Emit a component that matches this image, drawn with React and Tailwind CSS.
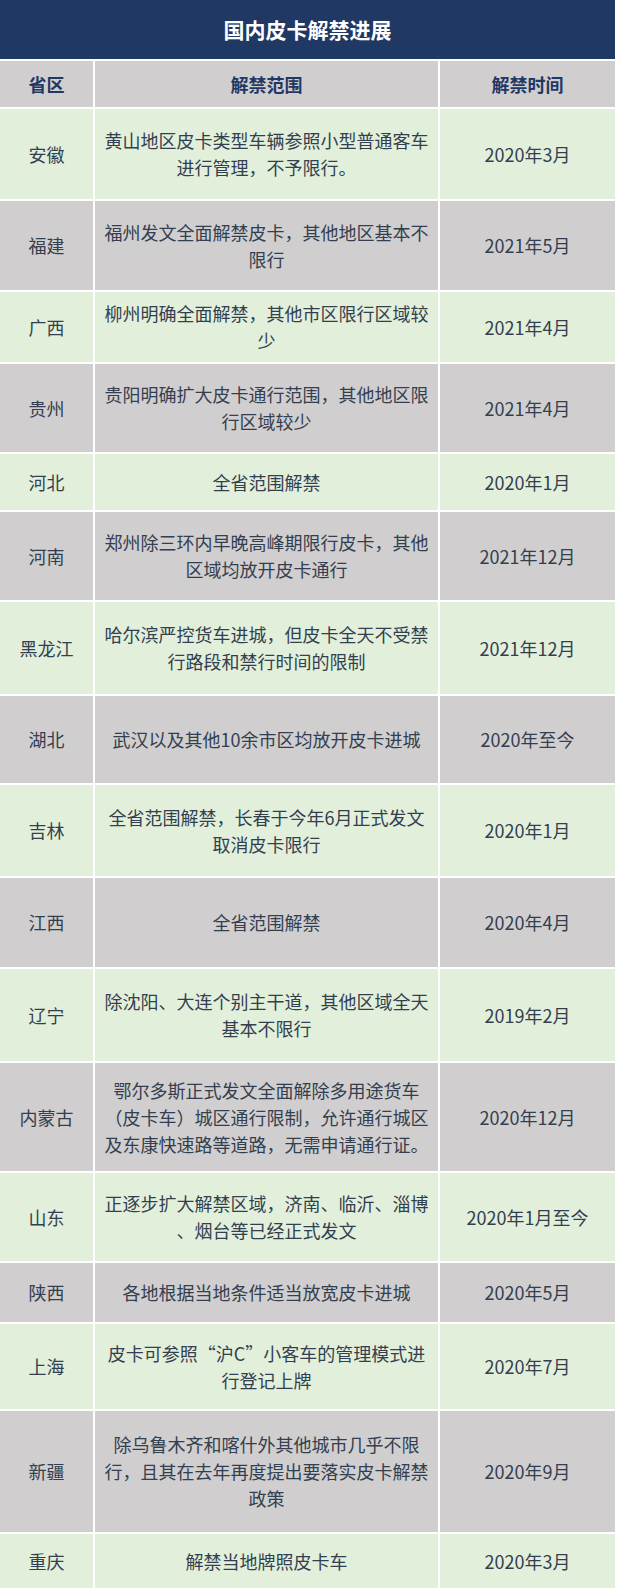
const rows = [
  { p: "安徽", lines: ["黄山地区皮卡类型车辆参照小型普通客车", "进行管理，不予限行。"], t: "2020年3月", h: "h-[90px]", g: true },
  { p: "福建", lines: ["福州发文全面解禁皮卡，其他地区基本不", "限行"], t: "2021年5月", h: "h-[89px]", g: false },
  { p: "广西", lines: ["柳州明确全面解禁，其他市区限行区域较", "少"], t: "2021年4月", h: "h-[70px]", g: true },
  { p: "贵州", lines: ["贵阳明确扩大皮卡通行范围，其他地区限", "行区域较少"], t: "2021年4月", h: "h-[88px]", g: false },
  { p: "河北", lines: ["全省范围解禁"], t: "2020年1月", h: "h-[56px]", g: true },
  { p: "河南", lines: ["郑州除三环内早晚高峰期限行皮卡，其他", "区域均放开皮卡通行"], t: "2021年12月", h: "h-[88px]", g: false },
  { p: "黑龙江", lines: ["哈尔滨严控货车进城，但皮卡全天不受禁", "行路段和禁行时间的限制"], t: "2021年12月", h: "h-[92px]", g: true },
  { p: "湖北", lines: ["武汉以及其他10余市区均放开皮卡进城"], t: "2020年至今", h: "h-[87px]", g: false },
  { p: "吉林", lines: ["全省范围解禁，长春于今年6月正式发文", "取消皮卡限行"], t: "2020年1月", h: "h-[91px]", g: true },
  { p: "江西", lines: ["全省范围解禁"], t: "2020年4月", h: "h-[89px]", g: false },
  { p: "辽宁", lines: ["除沈阳、大连个别主干道，其他区域全天", "基本不限行"], t: "2019年2月", h: "h-[92px]", g: true },
  { p: "内蒙古", lines: ["鄂尔多斯正式发文全面解除多用途货车", "（皮卡车）城区通行限制，允许通行城区", "及东康快速路等道路，无需申请通行证。"], t: "2020年12月", h: "h-[108px]", g: false },
  { p: "山东", lines: ["正逐步扩大解禁区域，济南、临沂、淄博", "、烟台等已经正式发文"], t: "2020年1月至今", h: "h-[88px]", g: true },
  { p: "陕西", lines: ["各地根据当地条件适当放宽皮卡进城"], t: "2020年5月", h: "h-[59px]", g: false },
  { p: "上海", lines: ["皮卡可参照“沪C”小客车的管理模式进", "行登记上牌"], t: "2020年7月", h: "h-[85px]", g: true },
  { p: "新疆", lines: ["除乌鲁木齐和喀什外其他城市几乎不限", "行，且其在去年再度提出要落实皮卡解禁", "政策"], t: "2020年9月", h: "h-[121px]", g: false },
  { p: "重庆", lines: ["解禁当地牌照皮卡车"], t: "2020年3月", h: "h-[54px]", g: true },
];

const font = { fontFamily: '"Noto Sans CJK SC", "Noto Sans", sans-serif' };

export default function App() {
  return (
    <div className="w-[617px] bg-white" style={font}>
      <div className="w-[615px] flex flex-col gap-[2px] bg-white">
        <div className="h-[59px] bg-[#1f3864] flex items-center justify-center text-white font-bold text-[21px] leading-none">
          国内皮卡解禁进展
        </div>
        <div className="grid grid-cols-[93px_343px_175px] gap-[2px] h-[46px]">
          <div className="bg-[#d0cece] flex items-center justify-center font-bold text-[18px] text-[#1f3864]">省区</div>
          <div className="bg-[#d0cece] flex items-center justify-center font-bold text-[18px] text-[#1f3864]">解禁范围</div>
          <div className="bg-[#d0cece] flex items-center justify-center font-bold text-[18px] text-[#1f3864]">解禁时间</div>
        </div>
        {rows.map((r) => {
          const bg = r.g ? "bg-[#e2efda]" : "bg-[#d0cece]";
          return (
            <div key={r.p} className={`grid grid-cols-[93px_343px_175px] gap-[2px] ${r.h}`}>
              <div className={`${bg} flex items-center justify-center text-[18px] text-[#333f50]`}>{r.p}</div>
              <div className={`${bg} flex flex-col items-center justify-center text-[18px] leading-[27px] text-[#333f50] whitespace-nowrap`}>
                {r.lines.map((l, i) => (
                  <span key={i}>{l}</span>
                ))}
              </div>
              <div className={`${bg} flex items-center justify-center text-[18px] text-[#333f50]`}>{r.t}</div>
            </div>
          );
        })}
      </div>
    </div>
  );
}
